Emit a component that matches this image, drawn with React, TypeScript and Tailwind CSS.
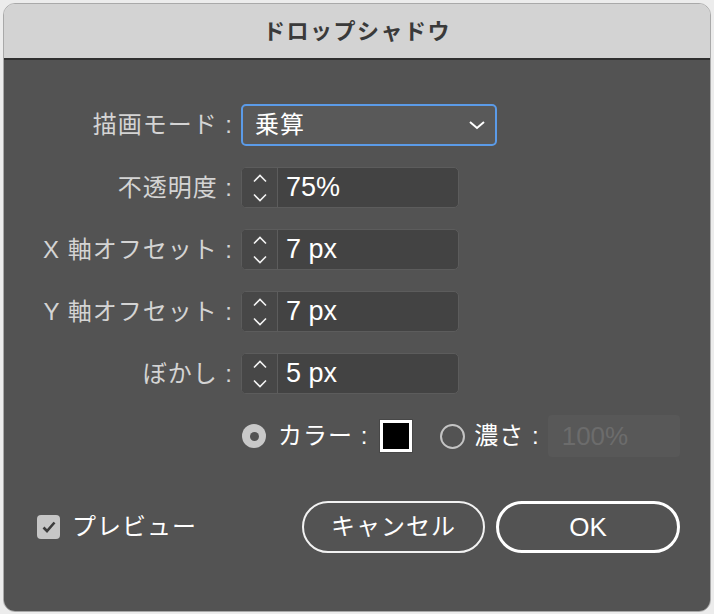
import type { ReactNode } from "react";

const FONT = { fontFamily: '"Liberation Sans", "Noto Sans CJK JP", sans-serif' };

function Label({ children }: { children: ReactNode }) {
  return (
    <div className="w-[229px] shrink-0 text-right text-[24px] tracking-[1px] text-[#d4d4d4] leading-none">
      {children}
    </div>
  );
}

function Stepper() {
  return (
    <div className="flex w-[36px] shrink-0 items-center justify-center border-r border-[#5c5c5c] bg-[#474747]">
      <svg width="16" height="30" viewBox="0 0 16 30" fill="none">
        <path d="M2 8.5 L8 2.5 L14 8.5" stroke="#f2f2f2" strokeWidth="1.6" />
        <path d="M2 21.5 L8 27.5 L14 21.5" stroke="#f2f2f2" strokeWidth="1.6" />
      </svg>
    </div>
  );
}

function NumberRow({ label, value }: { label: string; value: string }) {
  return (
    <div className="flex h-[41px] items-center">
      <Label>{label}</Label>
      <div className="ml-[8px] flex h-[41px] w-[218px] overflow-hidden rounded-[5px] border border-[#5c5c5c] bg-[#434343]">
        <Stepper />
        <div className="flex items-center pl-[8px] text-[27px] text-white leading-none">{value}</div>
      </div>
    </div>
  );
}

export default function App() {
  return (
    <div className="h-[614px] w-[714px] bg-[#ececec] p-[3px]" style={FONT}>
      <div className="flex h-[609px] flex-col overflow-hidden rounded-[12px] border border-[#a9a9a9]">
        <div className="flex h-[56px] shrink-0 items-center justify-center border-b-2 border-[#2f2f2f] bg-[#d3d3d3]">
          <span className="text-[22px] font-bold tracking-[1.5px] text-[#3a3a3a]">ドロップシャドウ</span>
        </div>

        <div className="flex flex-1 flex-col bg-[#535353] pt-[44px]">
          <div className="flex flex-col gap-[21px]">
            <div className="flex h-[42px] items-center">
              <Label>描画モード :</Label>
              <div className="ml-[8px] flex h-[42px] w-[256px] items-center justify-between rounded-[5px] border-2 border-[#5b9be8] bg-[#595959] pl-[12px] pr-[9px]">
                <span className="text-[24px] tracking-[1px] text-white leading-none">乗算</span>
                <svg width="18" height="10" viewBox="0 0 18 10" fill="none">
                  <path d="M2 2 L9 8 L16 2" stroke="#ffffff" strokeWidth="2" />
                </svg>
              </div>
            </div>
            <NumberRow label="不透明度 :" value="75%" />
            <NumberRow label="X 軸オフセット :" value="7 px" />
            <NumberRow label="Y 軸オフセット :" value="7 px" />
            <NumberRow label="ぼかし :" value="5 px" />

            <div className="flex h-[42px] items-center pl-[238px]">
              <div className="flex h-[24px] w-[24px] items-center justify-center rounded-full bg-[#c9c9c9]">
                <div className="h-[9px] w-[9px] rounded-full bg-[#535353]" />
              </div>
              <span className="ml-[12px] text-[24px] tracking-[1px] text-white leading-none">カラー :</span>
              <div className="ml-[11px] h-[34px] w-[34px] border border-[#474747]">
                <div className="h-full w-full border-[3px] border-white bg-black" />
              </div>
              <div className="ml-[27px] h-[25px] w-[25px] rounded-full border-2 border-[#c4c4c4]" />
              <span className="ml-[9px] text-[24px] tracking-[1px] text-white leading-none">濃さ :</span>
              <div className="ml-[8px] flex h-[42px] w-[132px] items-center rounded-[4px] bg-[#585858] pl-[14px] text-[26px] text-[#6c6c6c] leading-none">
                100%
              </div>
            </div>
          </div>

          <div className="mt-[44px] flex items-center pl-[33px] pr-[30px]">
            <div className="flex h-[24px] w-[23px] items-center justify-center rounded-[4px] bg-[#c6c6c6]">
              <svg width="16" height="14" viewBox="0 0 16 14" fill="none">
                <path d="M2.5 7.5 L6 11 L13.5 2.5" stroke="#3c3c3c" strokeWidth="2.6" />
              </svg>
            </div>
            <span className="ml-[12px] text-[24px] tracking-[1px] text-white leading-none">プレビュー</span>
            <div className="ml-auto flex gap-[11px]">
              <button className="flex h-[52px] w-[183px] items-center justify-center rounded-full border-2 border-[#f2f2f2] text-[24px] tracking-[1px] text-white">
                キャンセル
              </button>
              <button className="flex h-[52px] w-[184px] items-center justify-center rounded-full border-[3px] border-white text-[26px] text-white">
                OK
              </button>
            </div>
          </div>
        </div>
      </div>
    </div>
  );
}
